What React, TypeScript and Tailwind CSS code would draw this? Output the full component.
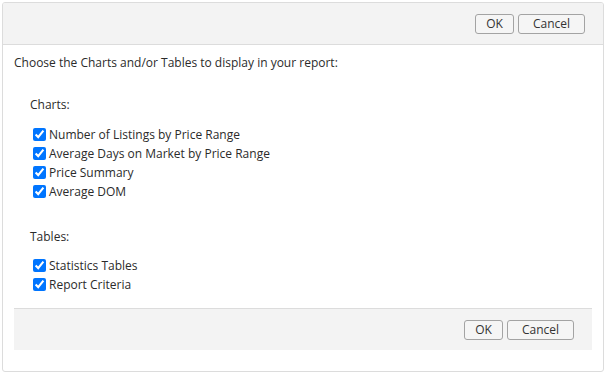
import React from "react";

function Btn({ label, w }: { label: string; w: string }) {
  return (
    <button
      type="button"
      className={`${w} h-[20px] rounded-[3px] border border-[#a3a3a3] bg-[#f5f5f5] text-[12px] leading-[18px] text-[#333] flex items-center justify-center`}
    >
      {label}
    </button>
  );
}

function Buttons() {
  return (
    <div className="flex gap-[4px]">
      <Btn label="OK" w="w-[39px]" />
      <Btn label="Cancel" w="w-[67px]" />
    </div>
  );
}

function Check({ label }: { label: string }) {
  return (
    <label className="flex h-[19px] items-center">
      <input
        type="checkbox"
        defaultChecked
        className="m-0 ml-[3px] mr-[3px] h-[13px] w-[13px]"
      />
      <span>{label}</span>
    </label>
  );
}

export default function App() {
  return (
    <div className="w-[608px] h-[374px] bg-white p-[2px] font-['Open_Sans',sans-serif] text-[12px] leading-[16px] text-[#2b2b2b]">
      <div className="h-[370px] w-[602px] rounded-[3px] border border-[#dcdcdc] flex flex-col overflow-hidden">
        <div className="h-[42px] shrink-0 border-b border-[#dcdcdc] bg-[#f3f3f3] flex items-center justify-end pr-[18px] pt-[1px]">
          <Buttons />
        </div>
        <div className="flex-1 px-[11px] pt-[10px] flex flex-col">
          <div>Choose the Charts and/or Tables to display in your report:</div>
          <div className="pl-[16px] mt-[26px]">Charts:</div>
          <div className="pl-[16px] mt-[12px] flex flex-col">
            <Check label="Number of Listings by Price Range" />
            <Check label="Average Days on Market by Price Range" />
            <Check label="Price Summary" />
            <Check label="Average DOM" />
          </div>
          <div className="pl-[16px] mt-[28px]">Tables:</div>
          <div className="pl-[16px] mt-[11px] flex flex-col">
            <Check label="Statistics Tables" />
            <Check label="Report Criteria" />
          </div>
          <div className="mt-[14px] h-[42px] border-t border-[#dcdcdc] bg-[#f3f3f3] flex items-center justify-end pr-[18px] pt-[1px]">
            <Buttons />
          </div>
        </div>
      </div>
    </div>
  );
}
